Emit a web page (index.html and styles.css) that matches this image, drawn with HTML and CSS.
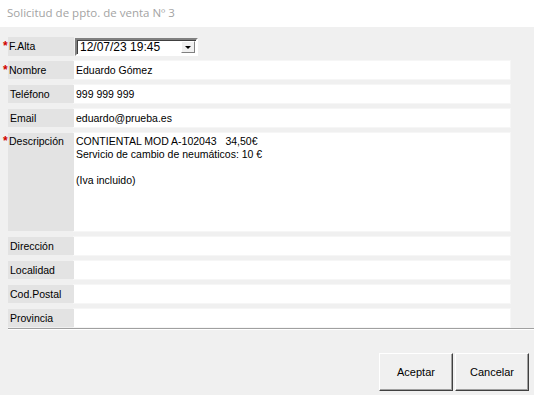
FILE: index.html
```html
<!DOCTYPE html>
<html lang="es">
<head>
  <meta charset="UTF-8">
  <title>Solicitud de ppto. de venta Nº 3</title>
  <link rel="stylesheet" href="styles.css">
</head>
<body>
  <div class="title-bar">Solicitud de ppto. de venta Nº 3</div>

  <div class="form">
    <div class="row">
      <div class="label req">F.Alta</div>
      <div class="date-cell">
        <div class="date-picker">
          <span class="date-text">12/07/23 19:45</span>
          <span class="drop-btn"><span class="arrow"></span></span>
        </div>
      </div>
    </div>
    <div class="row">
      <div class="label req">Nombre</div>
      <div class="field">Eduardo Gómez</div>
    </div>
    <div class="row">
      <div class="label">Teléfono</div>
      <div class="field">999 999 999</div>
    </div>
    <div class="row">
      <div class="label">Email</div>
      <div class="field">eduardo@prueba.es</div>
    </div>
    <div class="row tall">
      <div class="label req">Descripción</div>
      <div class="field memo">CONTIENTAL MOD A-102043&nbsp;&nbsp;&nbsp;34,50€<br>Servicio de cambio de neumáticos: 10 €<br><br>(Iva incluido)</div>
    </div>
    <div class="row">
      <div class="label">Dirección</div>
      <div class="field"></div>
    </div>
    <div class="row">
      <div class="label">Localidad</div>
      <div class="field"></div>
    </div>
    <div class="row">
      <div class="label">Cod.Postal</div>
      <div class="field"></div>
    </div>
    <div class="row">
      <div class="label">Provincia</div>
      <div class="field"></div>
    </div>
  </div>
  <div class="separator"></div>

  <div class="button-bar">
    <button class="btn">Aceptar</button>
    <button class="btn">Cancelar</button>
  </div>
</body>
</html>
```

FILE: styles.css
```css
body {
  margin: 0;
  padding: 0;
  width: 534px;
  height: 395px;
  overflow: hidden;
  background-color: #f0f0f0;
  font-family: "Liberation Sans", Arial, sans-serif;
  font-size: 10.5px;
  color: #000;
}

.title-bar {
  height: 27px;
  line-height: 25px;
  padding-left: 7px;
  background-color: #ffffff;
  color: #a3a3a3;
  font-family: "Open Sans", "Liberation Sans", sans-serif;
  font-size: 11.5px;
}

.form {
  display: flex;
  flex-direction: column;
  gap: 6px;
  padding: 10px 0 0 8px;
}

.row {
  display: grid;
  grid-template-columns: 66px 436px;
  height: 18px;
}

.row.tall {
  height: 98px;
}

.label {
  position: relative;
  background-color: #e3e3e3;
  padding-left: 2px;
  line-height: 18px;
}

.req {
  padding-left: 1px;
}

.req::before {
  content: "*";
  position: absolute;
  left: -5px;
  top: 0;
  color: #d00000;
  font-size: 12px;
  font-weight: bold;
}

.tall .label {
  line-height: 16px;
}

.field {
  background-color: #ffffff;
  padding-left: 2px;
  line-height: 18px;
  box-shadow: 0 0 0 1px #f6f6f6;
}

.memo {
  line-height: 13px;
  padding-top: 2px;
}

.date-cell {
  padding: 1px 0 0 1px;
}

.date-picker {
  width: 119px;
  height: 14px;
  display: flex;
  align-items: center;
  justify-content: space-between;
  background-color: #ffffff;
  border: 2px solid;
  border-color: #808080 #ffffff #ffffff #808080;
  box-shadow: inset 1px 1px 0 #404040;
}

.date-text {
  padding-left: 3px;
  font-size: 12px;
}

.drop-btn {
  width: 14px;
  height: 12px;
  margin-right: 1px;
  display: flex;
  align-items: center;
  justify-content: center;
  background-color: #f0f0f0;
  border: 1px solid;
  border-color: #ffffff #808080 #808080 #ffffff;
  box-sizing: border-box;
}

.arrow {
  width: 0;
  height: 0;
  border-left: 3px solid transparent;
  border-right: 3px solid transparent;
  border-top: 3px solid #000;
}

.separator {
  margin: 1px 0 0 8px;
  height: 1px;
  background-color: #a0a0a0;
  border-bottom: 1px solid #ffffff;
}

.button-bar {
  display: flex;
  justify-content: flex-end;
  gap: 2px;
  padding: 23px 5px 0 0;
}

.btn {
  width: 74px;
  height: 38px;
  padding: 0;
  background-color: #f0f0f0;
  border: 1px solid;
  border-color: #ffffff #404040 #404040 #ffffff;
  box-shadow: inset -1px -1px 0 #a0a0a0;
  font-family: "Liberation Sans", Arial, sans-serif;
  font-size: 11px;
  color: #000;
}
```
